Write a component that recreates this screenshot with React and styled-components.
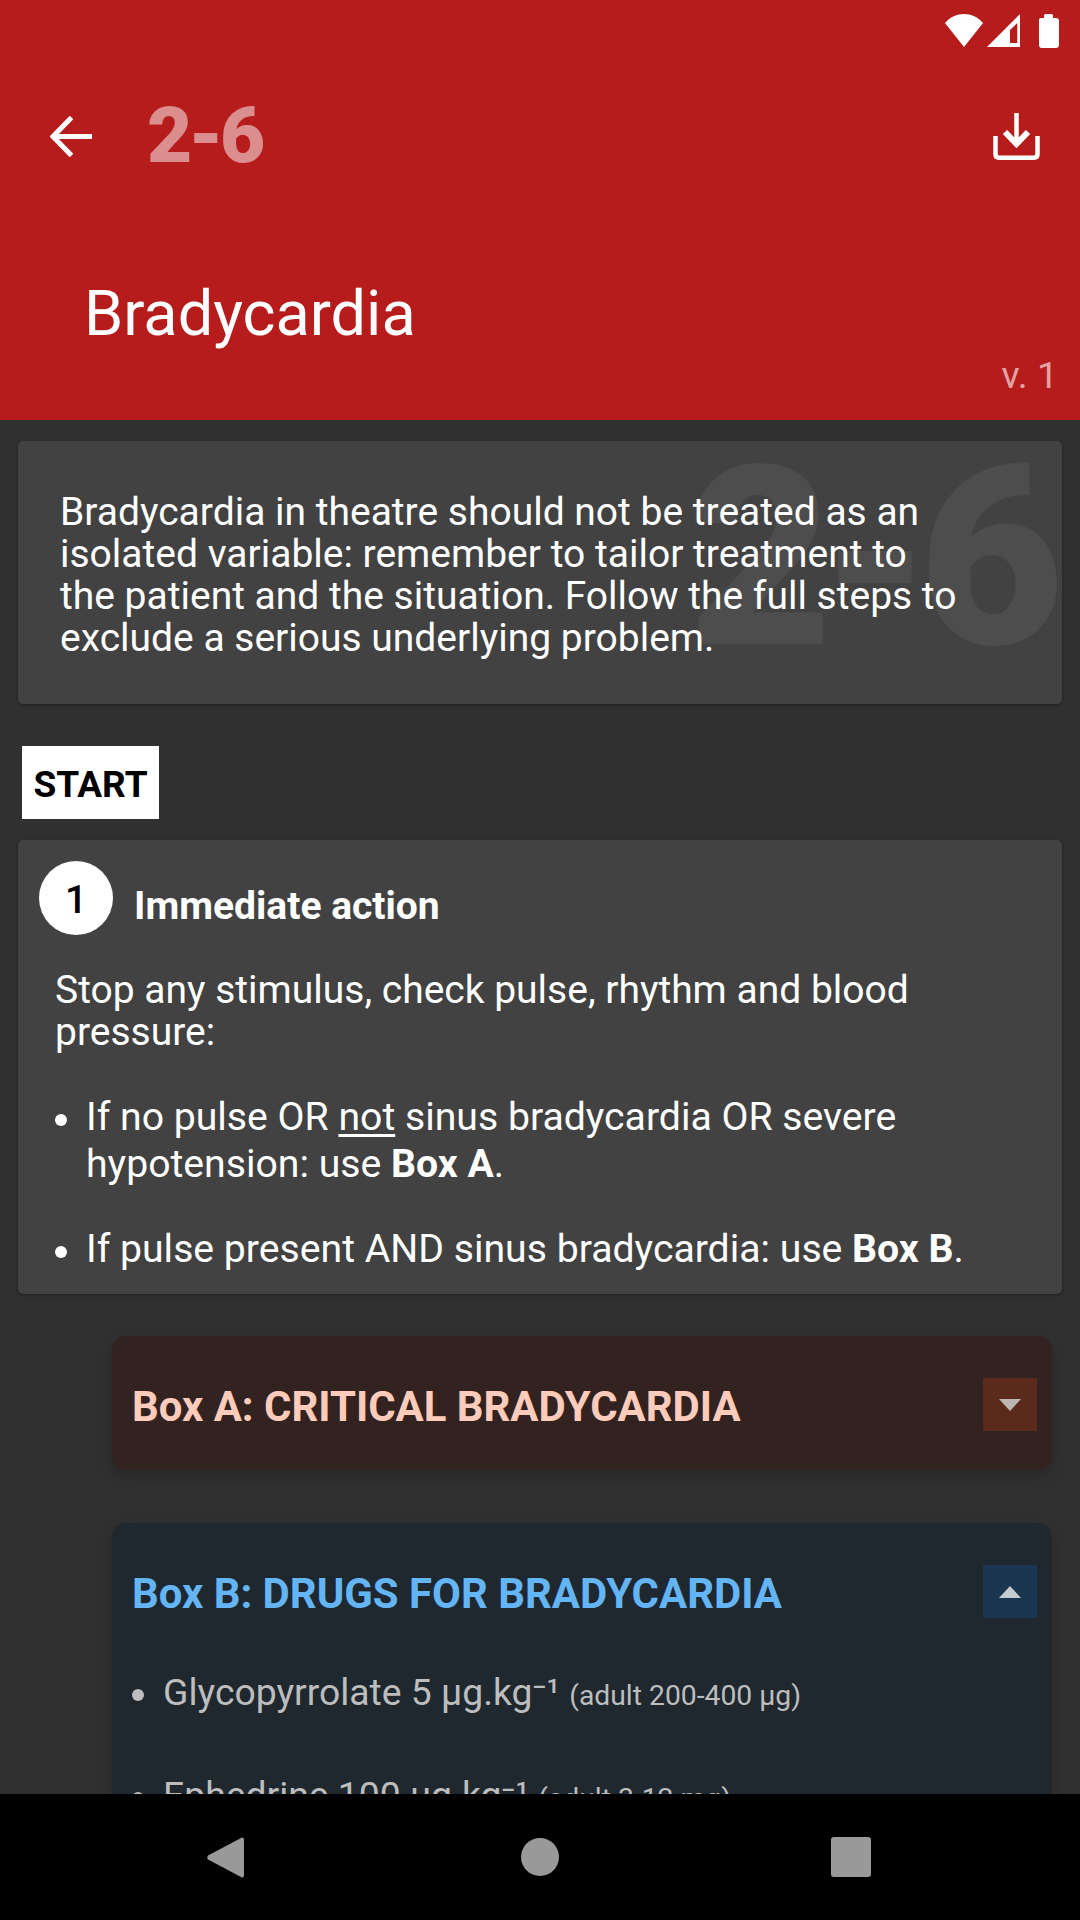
import React from 'react';
import styled, { createGlobalStyle } from 'styled-components';

const Global = createGlobalStyle`
  html, body { margin: 0; padding: 0; background: #303030; }
  * { box-sizing: border-box; }
  body { font-family: Roboto, "Liberation Sans", sans-serif; }
`;

const Screen = styled.div`
  width: 1080px;
  height: 1920px;
  display: flex;
  flex-direction: column;
  overflow: hidden;
  background: #303030;
`;

const Header = styled.header`
  height: 420px;
  flex: none;
  background: #b71c1c;
  color: #fff;
  display: flex;
  flex-direction: column;
`;

const StatusBar = styled.div`
  height: 72px;
  display: flex;
  justify-content: flex-end;
  align-items: flex-start;
  padding: 14px 21px 0 0;
`;

const Toolbar = styled.div`
  height: 128px;
  display: flex;
  align-items: center;
  padding: 0 40px 0 50px;
`;

const ToolIcon = styled.svg`
  display: block;
  flex: none;
`;

const Code = styled.div`
  margin-left: 55px;
  font-size: 78px;
  font-weight: 900;
  line-height: 1;
  letter-spacing: -3.6px;
  color: rgba(255, 255, 255, 0.5);
  flex: 1;
`;

const Title = styled.h1`
  margin: 79px 0 0 84px;
  font-size: 63px;
  font-weight: 400;
  line-height: 70px;
`;

const Version = styled.div`
  margin: 5px 22px 0 0;
  text-align: right;
  font-size: 37.5px;
  line-height: 42px;
  color: rgba(255, 255, 255, 0.6);
`;

const Main = styled.main`
  flex: 1;
  min-height: 0;
  overflow: hidden;
  padding: 21px 18px 0;
  display: flex;
  flex-direction: column;
`;

const Card = styled.section`
  position: relative;
  flex: none;
  background: #424242;
  border-radius: 5px;
  box-shadow: 0 1px 3px rgba(0, 0, 0, 0.35);
  color: #fff;
  font-size: 39px;
  line-height: 42px;
`;

const IntroCard = styled(Card)`
  height: 263px;
  padding: 50px 99px 0 42px;
  overflow: hidden;
`;

const Watermark = styled.div`
  position: absolute;
  right: 11px;
  top: -32px;
  font-size: 250px;
  font-weight: 900;
  line-height: 300px;
  letter-spacing: -13px;
  color: rgba(255, 255, 255, 0.06);
`;

const IntroText = styled.p`
  position: relative;
  margin: 0;
`;

const StartTag = styled.div`
  width: 137px;
  height: 73px;
  margin: 42px 0 21px 4px;
  background: #fff;
  color: #000;
  font-size: 37px;
  font-weight: 700;
  line-height: 78px;
  text-align: center;
  flex: none;
`;

const StepCard = styled(Card)`
  height: 454px;
  padding: 21px 36px 0 21px;
`;

const StepHead = styled.div`
  display: flex;
  align-items: flex-start;
  gap: 21px;
`;

const StepNumber = styled.div`
  width: 74px;
  height: 74px;
  padding-top: 3px;
  border-radius: 50%;
  background: #fff;
  color: #000;
  display: flex;
  align-items: center;
  justify-content: center;
  font-size: 39px;
  font-weight: 500;
`;

const StepTitle = styled.h2`
  margin: 24px 0 0;
  font-size: 39px;
  font-weight: 700;
  line-height: 42px;
`;

const StepText = styled.p`
  margin: 34px 0 0 16px;
`;

const StepList = styled.ul`
  list-style: none;
  margin: 41px 0 0 16px;
  padding: 0;
`;

const BulletItem = styled.li`
  position: relative;
  padding-left: ${p => p.$indent}px;
  margin-top: ${p => p.$gap}px;
  line-height: ${p => p.$line}px;
  color: ${p => p.$color || '#fff'};
  font-size: ${p => p.$size}px;

  &::before {
    content: '';
    position: absolute;
    left: 0;
    top: ${p => p.$dotTop}px;
    width: 12px;
    height: 12px;
    border-radius: 50%;
    background: currentColor;
  }
`;

const Under = styled.u`
  text-underline-offset: 4px;
`;

const Box = styled.section`
  flex: none;
  margin: ${p => p.$top}px 10px 0 94px;
  border-radius: 14px;
  background: ${p => p.$bg};
  box-shadow: 0 6px 14px rgba(0, 0, 0, 0.18);
  padding: 42px 15px 0 20px;
  height: ${p => p.$height}px;
`;

const BoxHead = styled.div`
  display: flex;
  align-items: flex-start;
  justify-content: space-between;
`;

const BoxTitle = styled.h3`
  margin: 2px 0 0;
  font-size: 41.9px;
  font-weight: 700;
  line-height: 53px;
  color: ${p => p.$color};
`;

const Toggle = styled.div`
  width: 54px;
  height: 53px;
  background: ${p => p.$bg};
  display: flex;
  align-items: center;
  justify-content: center;
`;

const DrugList = styled.ul`
  list-style: none;
  margin: 49px 0 0;
  padding: 0;
`;

const Small = styled.span`
  font-size: 28.3px;
`;

const NavBar = styled.nav`
  height: 126px;
  flex: none;
  background: #000;
  display: flex;
  align-items: center;
  padding-left: 207px;
`;

const NavIcon = styled.svg`
  display: block;
  flex: none;
  margin-left: ${p => p.$offset}px;
`;

export default function App() {
  return (
    <Screen>
      <Global />
      <Header>
        <StatusBar>
          <svg width="114" height="34" viewBox="0 0 114 34" fill="#fff" style={{ display: 'block' }}>
            <path d="M0 9 C10 -3 28 -3 38 9 L19 33 Z" />
            <path d="M42 33 L75 0 L75 33 Z" />
            <path d="M65 16 L72.3 9 L72.3 29 L65 29 Z" fill="#b71c1c" />
            <path d="M94 6 C94 4.6 95 4 96 4 L99 4 L99 1.5 Q99 0 100.5 0 L106.5 0 Q108 0 108 1.5 L108 4 L111 4 C112.6 4 114 5 114 6.5 L114 31 C114 33 112.6 34 111 34 L97 34 C95 34 94 33 94 31 Z" />
          </svg>
        </StatusBar>
        <Toolbar>
          <ToolIcon width="42" height="41" viewBox="0 0 42 41" fill="none" stroke="#fff" strokeWidth="5">
            <path d="M42 20.5 H5" />
            <path d="M21.5 1.5 L3 20.5 L21.5 39.5" />
          </ToolIcon>
          <Code>2-6</Code>
          <ToolIcon width="47" height="47" viewBox="0 0 47 47" fill="none" stroke="#fff" strokeWidth="4.5">
            <path d="M23.5 0 V30" />
            <path d="M12 19 L23.5 31 L35 19" strokeWidth="6" />
            <path d="M2.5 23 V41 Q2.5 44.7 6 44.7 H41 Q44.5 44.7 44.5 41 V23" />
          </ToolIcon>
        </Toolbar>
        <Title>Bradycardia</Title>
        <Version>v. 1</Version>
      </Header>
      <Main>
        <IntroCard>
          <Watermark>2-6</Watermark>
          <IntroText>
            Bradycardia in theatre should not be treated as an isolated variable: remember to tailor treatment to
            the patient and the situation. Follow the full steps to exclude a serious underlying problem.
          </IntroText>
        </IntroCard>
        <StartTag>START</StartTag>
        <StepCard>
          <StepHead>
            <StepNumber>1</StepNumber>
            <StepTitle>Immediate action</StepTitle>
          </StepHead>
          <StepText>Stop any stimulus, check pulse, rhythm and blood pressure:</StepText>
          <StepList>
            <BulletItem $indent={31} $gap={0} $line={47} $dotTop={20} $size={39.2}>
              If no pulse OR <Under>not</Under> sinus bradycardia OR severe hypotension: use <b>Box A</b>.
            </BulletItem>
            <BulletItem $indent={31} $gap={38} $line={47} $dotTop={20} $size={39.2}>
              If pulse present AND sinus bradycardia: use <b>Box B</b>.
            </BulletItem>
          </StepList>
        </StepCard>
        <Box $top={42} $bg="#332320" $height={134}>
          <BoxHead>
            <BoxTitle $color="#ffccbc">Box A: CRITICAL BRADYCARDIA</BoxTitle>
            <Toggle $bg="#5a2a1c">
              <svg width="22" height="12" viewBox="0 0 22 12" fill="#bdb5b2"><path d="M0 0 H22 L11 12 Z" /></svg>
            </Toggle>
          </BoxHead>
        </Box>
        <Box $top={53} $bg="#1f282f" $height={420}>
          <BoxHead>
            <BoxTitle $color="#64b5f6">Box B: DRUGS FOR BRADYCARDIA</BoxTitle>
            <Toggle $bg="#1a3650">
              <svg width="22" height="12" viewBox="0 0 22 12" fill="#c6cbd0"><path d="M0 12 H22 L11 0 Z" /></svg>
            </Toggle>
          </BoxHead>
          <DrugList>
            <BulletItem $indent={31} $gap={0} $line={47} $dotTop={20} $size={37.3} $color="#bdbdbd">
              Glycopyrrolate 5 µg.kg⁻¹ <Small>(adult 200-400 µg)</Small>
            </BulletItem>
            <BulletItem $indent={31} $gap={53} $line={47} $dotTop={20} $size={37.3} $color="#bdbdbd">
              Ephedrine 100 µg.kg⁻¹ <Small>(adult 3-12 mg)</Small>
            </BulletItem>
          </DrugList>
        </Box>
      </Main>
      <NavBar>
        <NavIcon $offset={0} width="37" height="41" viewBox="0 0 37 41" fill="#999">
          <path d="M35 0.5 Q37 0 37 3 V38 Q37 41 35 40.5 L1 22.5 Q-0.5 20.5 1 18.5 Z" />
        </NavIcon>
        <NavIcon $offset={277} width="38" height="38" viewBox="0 0 38 38" fill="#999">
          <circle cx="19" cy="19" r="19" />
        </NavIcon>
        <NavIcon $offset={272} width="40" height="40" viewBox="0 0 40 40" fill="#999">
          <rect width="40" height="40" rx="3" />
        </NavIcon>
      </NavBar>
    </Screen>
  );
}
